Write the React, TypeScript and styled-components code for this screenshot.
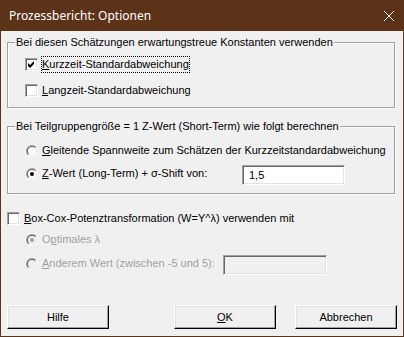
import React from "react";
import styled, { createGlobalStyle } from "styled-components";

const brown = "#5c3219";

const GlobalStyle = createGlobalStyle`
  html, body {
    margin: 0;
    padding: 0;
    background: #f0f0f0;
  }
  body {
    font-family: "Liberation Sans", Arial, sans-serif;
    font-size: 11px;
    color: #000;
  }
`;

const Window = styled.div`
  width: 404px;
  height: 337px;
  box-sizing: border-box;
  border: 1px solid ${brown};
  border-top: 0;
  background: #f0f0f0;
  display: flex;
  flex-direction: column;
`;

const TitleBar = styled.div`
  height: 31px;
  margin: 0 -1px;
  padding: 0 10px 0 9px;
  background: ${brown};
  color: #fff;
  display: flex;
  align-items: center;
  justify-content: space-between;
  font-family: "Noto Sans", "Open Sans", sans-serif;
  font-size: 12px;
`;

const Body = styled.div`
  flex: 1;
  display: flex;
  flex-direction: column;
  padding: 5px 8px 7px 6px;
`;

const Group = styled.fieldset<{ $top: number; $gap: number; $mt?: number }>`
  margin: ${(p) => p.$mt ?? 0}px 0 0 0;
  padding: ${(p) => p.$top}px 8px 8px 7px;
  min-width: 0;
  border: 1px solid #a0a0a0;
  box-shadow: 1px 1px 0 #fff, inset 1px 1px 0 #fff;
  display: flex;
  flex-direction: column;
  gap: ${(p) => p.$gap}px;
`;

const Legend = styled.legend`
  padding: 0 1px;
  line-height: 13px;
  background: #f0f0f0;
`;

const Row = styled.div<{ $h?: number; $indent?: number; $mt?: number }>`
  display: flex;
  align-items: center;
  height: ${(p) => p.$h ?? 17}px;
  padding-left: ${(p) => p.$indent ?? 10}px;
  margin-top: ${(p) => p.$mt ?? 0}px;
`;

// radio + label pair; lifted a little when it sits beside a text box
const OptionWrap = styled.span<{ $lift?: number }>`
  display: flex;
  align-items: center;
  margin-bottom: ${(p) => (p.$lift ?? 0) * 2}px;
`;

const CheckBox = styled.span`
  width: 13px;
  height: 13px;
  box-sizing: border-box;
  flex: none;
  border: 1px solid;
  border-color: #a0a0a0 #fff #fff #a0a0a0;
  box-shadow: inset 1px 1px 0 #696969, inset -1px -1px 0 #e3e3e3;
  background: #fff;
  display: flex;
  align-items: center;
  justify-content: center;
`;

const RadioOuter = styled.span`
  width: 12px;
  height: 12px;
  margin-left: 1px;
  box-sizing: border-box;
  flex: none;
  padding: 1px;
  border-radius: 50%;
  background: linear-gradient(135deg, #a0a0a0 50%, #fff 50%);
  display: flex;
`;

const RadioInner = styled.span`
  flex: 1;
  padding: 1px;
  border-radius: 50%;
  background: linear-gradient(135deg, #696969 50%, #e3e3e3 50%);
  display: flex;
`;

const RadioFace = styled.span<{ $disabled?: boolean }>`
  flex: 1;
  border-radius: 50%;
  background: ${(p) => (p.$disabled ? "#f0f0f0" : "#fff")};
  display: flex;
  align-items: center;
  justify-content: center;
`;

const Dot = styled.span<{ $disabled?: boolean }>`
  width: 4px;
  height: 4px;
  border-radius: 50%;
  background: ${(p) => (p.$disabled ? "#a0a0a0" : "#000")};
`;

const Label = styled.span<{ $disabled?: boolean; $focus?: boolean; $w?: number }>`
  margin-left: 3px;
  box-sizing: border-box;
  width: ${(p) => (p.$w ? `${p.$w}px` : "auto")};
  flex: none;
  border: 1px dotted ${(p) => (p.$focus ? "#000" : "transparent")};
  padding: 1px 0;
  line-height: 13px;
  white-space: nowrap;
  color: ${(p) => (p.$disabled ? "#a0a0a0" : "#000")};
`;

const TextBox = styled.input<{ $w: number }>`
  width: ${(p) => p.$w}px;
  height: 20px;
  box-sizing: border-box;
  margin: 0;
  padding: 0 0 0 6px;
  border: 1px solid;
  border-color: #a0a0a0 #fff #fff #a0a0a0;
  box-shadow: inset 1px 1px 0 #696969, inset -1px -1px 0 #e3e3e3;
  background: #fff;
  font: inherit;
  color: #000;
  outline: none;

  &:disabled {
    background: #f0f0f0;
  }
`;

const ButtonBar = styled.div`
  margin-top: auto;
  margin-right: -2px;
  display: flex;
  gap: 19px;
`;

const Button = styled.button<{ $push?: boolean }>`
  width: 102px;
  height: 24px;
  margin: 0;
  margin-left: ${(p) => (p.$push ? "auto" : "0")};
  padding: 0;
  box-sizing: border-box;
  border: 1px solid;
  border-color: #fff #000 #000 #fff;
  box-shadow: inset -1px -1px 0 #a0a0a0, inset 1px 1px 0 #e3e3e3;
  background: #f0f0f0;
  font: inherit;
  color: #000;
`;

function Tick() {
  return (
    <svg width="11" height="11" viewBox="0 0 11 11">
      <polygon points="2,4 4,6 8,2 8,5 4,9 2,7" fill="#000" />
    </svg>
  );
}

function Option(props: {
  kind: "check" | "radio";
  checked?: boolean;
  disabled?: boolean;
  focus?: boolean;
  width?: number;
  lift?: number;
  children: React.ReactNode;
}) {
  const { kind, checked, disabled, focus, width, lift, children } = props;
  return (
    <OptionWrap $lift={lift}>
      {kind === "check" ? (
        <CheckBox>{checked && <Tick />}</CheckBox>
      ) : (
        <RadioOuter>
          <RadioInner>
            <RadioFace $disabled={disabled}>
              {checked && <Dot $disabled={disabled} />}
            </RadioFace>
          </RadioInner>
        </RadioOuter>
      )}
      <Label $disabled={disabled} $focus={focus} $w={width}>
        {children}
      </Label>
    </OptionWrap>
  );
}

export default function App() {
  return (
    <>
      <GlobalStyle />
      <Window>
        <TitleBar>
          <span>Prozessbericht: Optionen</span>
          <svg width="10" height="10" viewBox="0 0 10 10">
            <path d="M0 0L10 10M10 0L0 10" stroke="#fff" strokeWidth="1" />
          </svg>
        </TitleBar>
        <Body>
          <Group $top={7} $gap={9}>
            <Legend>Bei diesen Schätzungen erwartungstreue Konstanten verwenden</Legend>
            <Row>
              <Option kind="check" checked focus>
                <u>K</u>urzzeit-Standardabweichung
              </Option>
            </Row>
            <Row>
              <Option kind="check">
                <u>L</u>angzeit-Standardabweichung
              </Option>
            </Row>
          </Group>

          <Group $top={9} $gap={6} $mt={12}>
            <Legend>Bei Teilgruppengröße = 1 Z-Wert (Short-Term) wie folgt berechnen</Legend>
            <Row>
              <Option kind="radio">
                <u>G</u>leitende Spannweite zum Schätzen der Kurzzeitstandardabweichung
              </Option>
            </Row>
            <Row $h={20}>
              <Option kind="radio" checked width={201} lift={1.5}>
                <u>Z</u>-Wert (Long-Term) + σ-Shift von:
              </Option>
              <TextBox $w={103} defaultValue="1,5" readOnly />
            </Row>
          </Group>

          <Row $indent={0} $mt={16}>
            <Option kind="check">
              <u>B</u>ox-Cox-Potenztransformation (W=Y^λ) verwenden mit
            </Option>
          </Row>
          <Row $indent={18} $mt={4}>
            <Option kind="radio" checked disabled>
              O<u>p</u>timales λ
            </Option>
          </Row>
          <Row $indent={18} $mt={7} $h={20}>
            <Option kind="radio" disabled width={182} lift={1.5}>
              <u>A</u>nderem Wert (zwischen -5 und 5):
            </Option>
            <TextBox $w={104} disabled />
          </Row>

          <ButtonBar>
            <Button>Hilfe</Button>
            <Button $push>
              <u>O</u>K
            </Button>
            <Button>Abbrechen</Button>
          </ButtonBar>
        </Body>
      </Window>
    </>
  );
}
